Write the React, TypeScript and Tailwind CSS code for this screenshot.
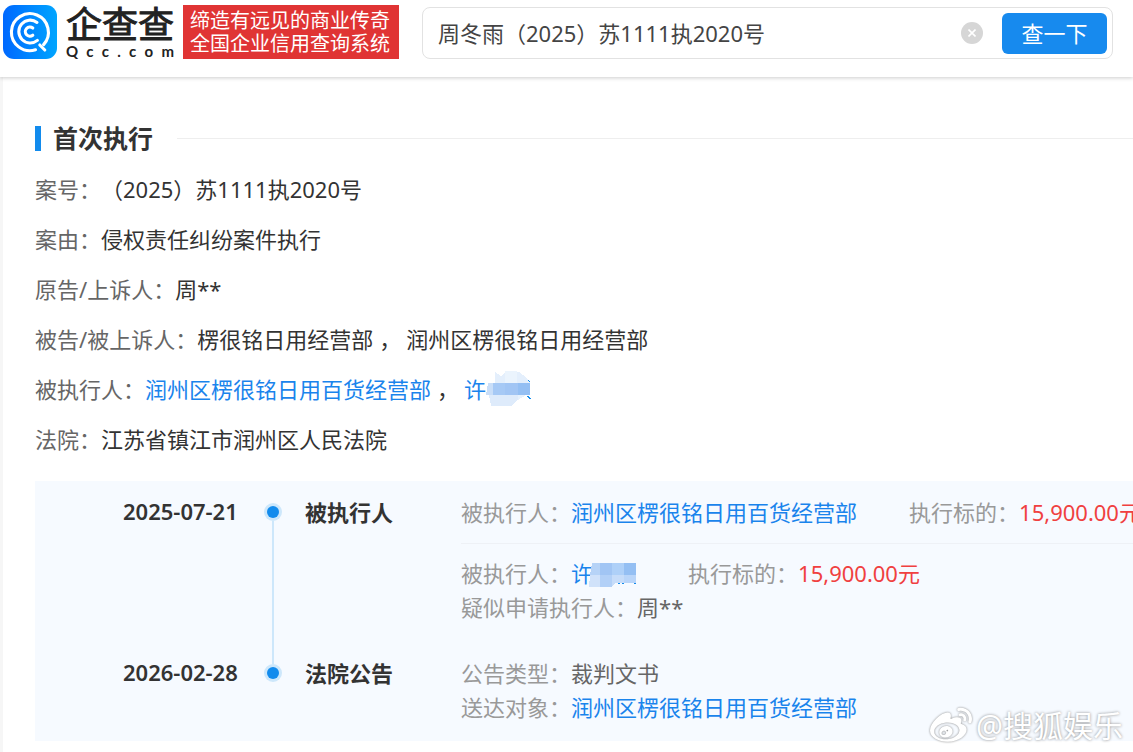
import type { ReactNode } from "react";
import { FaWeibo } from "react-icons/fa";

const COMPANY = "润州区楞很铭日用百货经营部";

const QccLogo = () => (
  <svg viewBox="0 0 54 54" className="size-[54px] shrink-0" role="img" aria-label="企查查">
    <defs>
      <linearGradient id="qcc" x1="0" y1="0" x2="1" y2="0">
        <stop offset="0" stopColor="#0068ff" />
        <stop offset="1" stopColor="#00a5ff" />
      </linearGradient>
    </defs>
    <rect width="54" height="54" rx="11" fill="url(#qcc)" />
    <g fill="none" stroke="#fff" strokeWidth="3.1" strokeLinecap="round">
      <path d="M32.5 44.8A18.5 18.5 0 1 1 40.6 39.6" />
      <path d="M36.8 40L41.8 45" />
      <path d="M34 17.4A11.4 11.4 0 1 0 34.4 35.4" />
      <path d="M29.8 23A4.6 4.6 0 1 0 29.8 30.2" />
    </g>
  </svg>
);

const Wordmark = () => (
  <div className="ml-[9px] w-[110px] shrink-0 text-[#222]">
    <div className="text-[36px] leading-[39px] [-webkit-text-stroke:1px_#222]">企查查</div>
    <div className="flex justify-between pr-[2px] font-[Lato] text-[15px] font-bold leading-[15px]">
      {"Qcc.com".split("").map((letter, i) => (
        <span key={i}>{letter}</span>
      ))}
    </div>
  </div>
);

const Header = () => (
  <header className="relative flex items-end bg-white pt-[5px] pr-5 pb-[18px] pl-[3px] shadow-[0_1px_4px_rgba(0,0,0,0.2)]">
    <QccLogo />
    <Wordmark />
    <div className="ml-[7px] h-[54px] w-[216px] shrink-0 bg-[#e03434] px-[7px] py-1 text-xl leading-[23px] whitespace-nowrap text-white">
      <p>缔造有远见的商业传奇</p>
      <p>全国企业信用查询系统</p>
    </div>
    <form
      className="ml-[23px] flex h-[52px] flex-1 items-center rounded-lg border border-[#e2e2e2] pr-[5px] pl-[15px]"
      onSubmit={(e) => e.preventDefault()}
    >
      <input
        aria-label="搜索"
        defaultValue="周冬雨（2025）苏1111执2020号"
        className="min-w-0 flex-1 bg-transparent text-[22px] text-[#444] outline-none"
      />
      <button
        type="button"
        aria-label="清除"
        className="mr-[19px] flex size-[22px] items-center justify-center rounded-full bg-[#d6d6d6]"
      >
        <svg viewBox="0 0 8 8" className="size-2" stroke="#fff" strokeWidth="1.6">
          <path d="M.5 .5l7 7M7.5 .5l-7 7" />
        </svg>
      </button>
      <button className="h-[41px] w-[105px] rounded-md bg-[#178aee] text-[22px] text-white">查一下</button>
    </form>
  </header>
);

const CompanyLink = ({ children }: { children: ReactNode }) => (
  <a href="#" className="text-[#1a84ec]">
    {children}
  </a>
);

const Comma = () => <span className="mr-[5px] ml-[6px]">，</span>;

const Row = ({ label, children }: { label: string; children: ReactNode }) => (
  <div className="flex text-[#333]">
    <dt className="text-[#666]">{label}：</dt>
    <dd className="flex">{children}</dd>
  </div>
);

const Field = ({ label, children }: { label: string; children: ReactNode }) => (
  <div className="flex text-[#666]">
    <dt className="text-[#999]">{label}：</dt>
    <dd className="flex">{children}</dd>
  </div>
);

const Amount = () => <span className="text-[#f04040]">15,900.00元</span>;

const MosaicRound = () => (
  <svg viewBox="0 0 46 36" className="h-9 w-[46px]" shapeRendering="crispEdges">
    <path d="M9 12V1l6 4 4-4h14l7 5 4 6z" fill="#e4effc" />
    <path d="M19 0h12v12H19z" fill="#ebf4fd" />
    <path d="M2 12h6v12H0z" fill="#c9def8" />
    <path d="M7 12h12v12H7z" fill="#a6c9f5" />
    <path d="M19 12h13v12H19z" fill="#a1c5f4" />
    <path d="M32 12h12v12H32z" fill="#94bff3" />
    <path d="M3 24h29v4l-7 7H5z" fill="#deebfb" />
    <path d="M32 24h8l-8 5z" fill="#e6f1fd" />
    <path d="M41 25l4 3M42 9l2 2" stroke="#128bed" />
  </svg>
);

const MosaicFlat = () => (
  <svg viewBox="0 -4 47 28" className="-ml-1 h-7 w-[47px]" shapeRendering="crispEdges">
    <path d="M3 0h8v12H1z" fill="#b6d3f7" />
    <path d="M11 0h12v12H11z" fill="#a1c5f4" />
    <path d="M23 0h12v12H23z" fill="#aed0f8" />
    <path d="M35 0h12v12H35z" fill="#94bff3" />
    <path d="M1 12h10v12H0z" fill="#d0e2fa" />
    <path d="M11 12h12v12H11z" fill="#b2d0f7" />
    <path d="M23 12h12v8h-9l-3 3z" fill="#c6dcf9" />
    <path d="M35 12h12v8H35z" fill="#b9d5f9" />
    <path d="M29 20.5h2M33 20.5h2M45 20.5h2" stroke="#128bed" />
  </svg>
);

type EventProps = { date: string; title: string; first?: boolean; last?: boolean; children: ReactNode };

const TimelineEvent = ({ date, title, first, last, children }: EventProps) => (
  <li className="flex leading-[34px]">
    <time className="w-[118px] shrink-0 font-semibold leading-[32px] text-[#333]">{date}</time>
    <div className="mx-[23px] flex w-[18px] shrink-0 flex-col items-center">
      <span className={`h-2 w-[2px] ${first ? "" : "bg-[#cde7fb]"}`} />
      <span className="flex size-[18px] items-center justify-center rounded-full bg-[#cde7fb]">
        <span className="size-3 rounded-full bg-[#128bed]" />
      </span>
      {!last && <span className="w-[2px] flex-1 bg-[#cde7fb]" />}
    </div>
    <h3 className="w-[156px] shrink-0 font-bold text-[#333]">{title}</h3>
    <div className={`min-w-0 flex-1 ${last ? "" : "pb-8"}`}>{children}</div>
  </li>
);

const Watermark = () => (
  <div className="absolute right-[10px] bottom-1 flex items-center gap-1 text-[30px] leading-[44px] text-white [text-shadow:0_0_3px_#888]">
    <FaWeibo className="size-[42px] drop-shadow-[0_0_1px_#888]" />
    <span>@搜狐娱乐</span>
  </div>
);

export default function App() {
  return (
    <div className="relative min-h-screen overflow-hidden bg-[#f6f6f6] font-['Noto_Sans','Noto_Sans_CJK_SC',sans-serif] text-[22px] whitespace-nowrap">
      <Header />
      <main className="ml-[3px] min-h-[675px] bg-white pt-[43px] pb-[11px] pl-8">
        <div className="flex items-center">
          <span className="h-[25px] w-[6px] bg-[#128bed]" />
          <h2 className="ml-3 text-[25px] font-bold leading-[37px] text-[#333]">首次执行</h2>
          <span className="ml-6 h-px flex-1 bg-[#eee]" />
        </div>

        <dl className="mt-[7px] leading-[50px]">
          <Row label="案号">（2025）苏1111执2020号</Row>
          <Row label="案由">侵权责任纠纷案件执行</Row>
          <Row label="原告/上诉人">周**</Row>
          <Row label="被告/被上诉人">
            楞很铭日用经营部
            <Comma />
            润州区楞很铭日用经营部
          </Row>
          <Row label="被执行人">
            <CompanyLink>{COMPANY}</CompanyLink>
            <Comma />
            <a href="#" className="flex items-center text-[#1a84ec]">
              许<MosaicRound />
            </a>
          </Row>
          <Row label="法院">江苏省镇江市润州区人民法院</Row>
        </dl>

        <ol className="mt-[17px] bg-[#f6faff] pt-[14px] pb-[17px] pl-[88px]">
          <TimelineEvent date="2025-07-21" title="被执行人" first>
            <dl className="flex gap-[52px] border-b border-[#eef1f6] pb-[14px]">
              <Field label="被执行人">
                <CompanyLink>{COMPANY}</CompanyLink>
              </Field>
              <Field label="执行标的">
                <Amount />
              </Field>
            </dl>
            <dl className="pt-3">
              <div className="flex gap-[52px]">
                <Field label="被执行人">
                  <a href="#" className="flex items-center text-[#1a84ec]">
                    许<MosaicFlat />
                  </a>
                </Field>
                <Field label="执行标的">
                  <Amount />
                </Field>
              </div>
              <Field label="疑似申请执行人">周**</Field>
            </dl>
          </TimelineEvent>
          <TimelineEvent date="2026-02-28" title="法院公告" last>
            <dl>
              <Field label="公告类型">裁判文书</Field>
              <Field label="送达对象">
                <CompanyLink>{COMPANY}</CompanyLink>
              </Field>
            </dl>
          </TimelineEvent>
        </ol>
      </main>
      <Watermark />
    </div>
  );
}
